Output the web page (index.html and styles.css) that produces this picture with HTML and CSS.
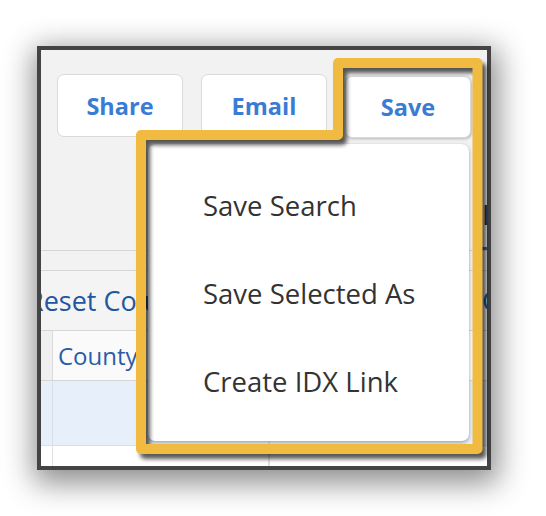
FILE: index.html
```html
<!DOCTYPE html>
<html lang="en">
<head>
<meta charset="utf-8">
<title>Save menu</title>
<link rel="stylesheet" href="styles.css">
</head>
<body>
<div class="stage">
  <div class="frame">
    <div class="toolbar">
      <button class="btn">Share</button>
      <button class="btn">Email</button>
      <button class="btn btn-active">Save</button>
    </div>
    <div class="tabs">
      <span class="tab tab-active">List</span>
    </div>
    <div class="spacer-row"></div>
    <div class="links">
      <span class="link link-reset">Reset Columns</span>
      <span class="link">Columns</span>
    </div>
    <div class="table">
      <div class="tr thead">
        <div class="td td-check"></div>
        <div class="td td-county">County</div>
        <div class="td"></div>
      </div>
      <div class="tr tsel">
        <div class="td td-check"></div>
        <div class="td td-county"></div>
        <div class="td"></div>
      </div>
      <div class="tr tplain">
        <div class="td td-check"></div>
        <div class="td td-county"></div>
        <div class="td"></div>
      </div>
    </div>

    <div class="dropdown">
      <div class="item">Save Search</div>
      <div class="item">Save Selected As</div>
      <div class="item">Create IDX Link</div>
    </div>
  </div>

  <svg class="callout" width="546" height="516" viewBox="0 0 546 516" aria-hidden="true">
    <path d="M141 449 V135 H338 V63 H477.5 V449 Z" fill="none" stroke="#f0bb40" stroke-width="10" stroke-linejoin="round"/>
  </svg>
</div>
</body>
</html>
```

FILE: styles.css
```css
* { box-sizing: border-box; }

html, body {
  margin: 0;
  padding: 0;
  background: #ffffff;
}

body {
  font-family: "Open Sans", "DejaVu Sans", sans-serif;
  width: 546px;
  height: 516px;
  overflow: hidden;
}

.stage {
  position: relative;
  width: 546px;
  height: 516px;
  padding: 46px 0 0 37px;
}

.frame {
  position: relative;
  width: 454px;
  height: 424px;
  border: 4px solid #444444;
  background: #f2f2f2;
  overflow: hidden;
  box-shadow: 2px 8px 28px 5px rgba(0, 0, 0, 0.45);
}

.toolbar {
  display: flex;
  gap: 18px;
  padding: 24px 16px 0 16px;
}

.btn {
  width: 126px;
  height: 63px;
  border: 1px solid #dadada;
  border-radius: 7px;
  background: #ffffff;
  color: #3a7bd5;
  font-family: "Open Sans", "DejaVu Sans", sans-serif;
  font-weight: 700;
  font-size: 23.5px;
  padding: 0;
}

.btn-active {
  margin-top: 2px;
  height: 62px;
  box-shadow: 1px 1px 3px rgba(0, 0, 0, 0.25);
}

.tabs {
  display: flex;
  height: 113px;
  padding-left: 441px;
  align-items: flex-end;
  border-bottom: 1px solid #d6d6d6;
  white-space: nowrap;
}

.tab {
  font-size: 27px;
  color: #333333;
  padding-bottom: 14px;
  line-height: 36px;
}

.tab-active {
  border-bottom: 3px solid #2f6fcf;
}

.spacer-row {
  height: 20px;
  border-bottom: 1px solid #d6d6d6;
}

.links {
  display: flex;
  height: 60px;
  align-items: center;
  border-bottom: 1px solid #d6d6d6;
  white-space: nowrap;
  background: #f4f4f4;
}

.link {
  font-size: 27px;
  color: #2356a2;
  flex-shrink: 0;
}

.link-reset {
  margin-left: -14px;
  width: 455px;
}

.table {
  background: #ffffff;
}

.tr {
  display: flex;
}

.td {
  border-right: 1px solid #dcdcdc;
}

.td-check {
  width: 12px;
}

.td-county {
  width: 216px;
  padding-left: 5px;
}

.thead {
  height: 50px;
  align-items: stretch;
  border-bottom: 1px solid #d6d6d6;
  background: #fafafa;
}

.thead .td-check {
  background: #f0f0f0;
}

.thead .td-county {
  font-size: 24px;
  color: #2a5ca8;
  display: flex;
  align-items: center;
  white-space: nowrap;
}

.tsel {
  height: 65px;
  background: #e7f0fa;
  border-bottom: 1px solid #d5e0ec;
}

.tsel .td {
  border-right-color: #d5e0ec;
}

.tplain {
  height: 30px;
  background: #ffffff;
}

.tplain .td {
  border-right-color: #e2e2e2;
}

.dropdown {
  position: absolute;
  left: 107px;
  top: 94px;
  width: 321px;
  height: 297px;
  background: #ffffff;
  border-radius: 7px;
  padding: 17px 0 16px 0;
  box-shadow: 0 2px 4px rgba(0, 0, 0, 0.3), 0 0 1px rgba(0, 0, 0, 0.2);
}

.item {
  height: 88px;
  display: flex;
  align-items: center;
  padding-left: 55px;
  font-size: 27.5px;
  color: #333333;
  white-space: nowrap;
}

.callout {
  position: absolute;
  left: 0;
  top: 0;
  filter: drop-shadow(4px 5px 2px rgba(0, 0, 0, 0.65));
  pointer-events: none;
}
```
